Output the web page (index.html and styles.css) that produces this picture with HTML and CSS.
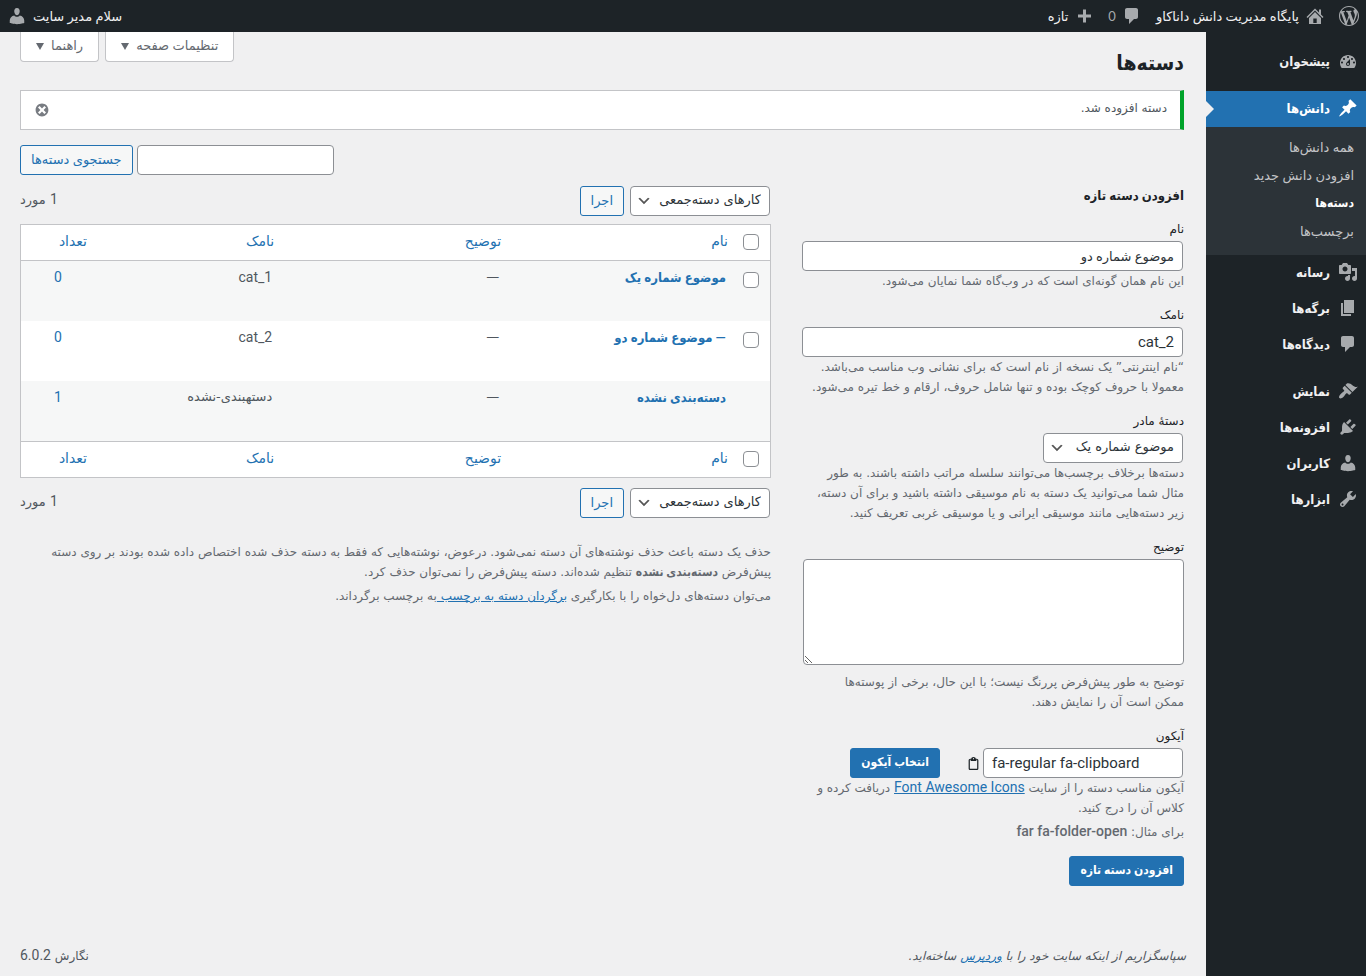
FILE: index.html
```html
<!DOCTYPE html>
<html lang="fa" dir="rtl">
<head>
<meta charset="utf-8">
<meta name="viewport" content="width=device-width, initial-scale=1">
<title>دسته‌ها</title>
<link rel="stylesheet" href="styles.css">
</head>
<body>
<header class="adminbar">
  <nav class="bar-group">
    <a class="bar-item" href="#" aria-label="وردپرس"><svg class="icon" viewBox="0 0 20 20"><path d="M20 10c0-5.51-4.49-10-10-10C4.48 0 0 4.49 0 10c0 5.52 4.48 10 10 10 5.51 0 10-4.48 10-10zM7.78 15.37L4.37 6.22c.55-.02 1.17-.08 1.17-.08.5-.06.44-1.13-.06-1.11 0 0-1.45.11-2.37.11-.18 0-.37 0-.58-.01C4.12 2.69 6.87 1.11 10 1.11c2.33 0 4.45.87 6.05 2.34-.68-.11-1.65.39-1.65 1.58 0 .74.45 1.36.9 2.1.35.61.55 1.36.55 2.46 0 1.49-1.4 5-1.4 5l-3.03-8.37c.54-.02.82-.17.82-.17.5-.05.44-1.25-.06-1.22 0 0-1.44.12-2.38.12-.87 0-2.33-.12-2.33-.12-.5-.03-.56 1.2-.06 1.22l.92.08 1.26 3.41zM17.41 10c.24-.64.74-1.87.43-4.25.7 1.29 1.05 2.71 1.05 4.25 0 3.29-1.73 6.24-4.4 7.78.97-2.59 1.94-5.2 2.92-7.78zM6.1 18.09C3.12 16.65 1.11 13.53 1.11 10c0-1.3.23-2.48.72-3.59C3.25 10.3 4.67 14.2 6.1 18.09zm4.03-6.63l2.58 6.98c-.86.29-1.76.45-2.71.45-.79 0-1.57-.11-2.29-.33.81-2.38 1.62-4.74 2.42-7.1z"/></svg></a>
    <a class="bar-item" href="#"><svg class="icon" viewBox="0 0 20 20"><path fill-rule="evenodd" d="M16 8.500l2.500 2.500-1.060 1.060L10 4.600l-7.440 7.460L1.500 11 10 2.500l4 4v-3h2v5zm-6-2.460l6 5.990V18H4v-5.970zM11.700 17v-4.500H8.300V17h3.400z"/></svg><span>پایگاه مدیریت دانش داناکاو</span></a>
    <a class="bar-item" href="#"><svg class="icon" viewBox="0 0 20 20"><path d="M5 2h9c1.100 0 2 .900 2 2v7c0 1.100-.900 2-2 2h-2l-5 5v-5H5c-1.100 0-2-.900-2-2V4c0-1.100.900-2 2-2z"/></svg><span class="bar-count">0</span></a>
    <a class="bar-item" href="#"><svg class="icon" viewBox="0 0 20 20"><path d="M17 8.500v3h-5v5H9v-5H4v-3h5v-5h3v5h5z"/></svg><span>تازه</span></a>
  </nav>
  <a class="bar-item" href="#"><span>سلام مدیر سایت</span><svg class="icon" viewBox="0 0 20 20"><path d="M10 9.250c-2.270 0-2.730-3.440-2.730-3.440C7 4.020 7.820 2 9.970 2c2.160 0 2.980 2.020 2.710 3.810 0 0-.410 3.440-2.680 3.440zM7.300 9.400c.700 1 1.600 1.300 2.700 1.300s2-.300 2.700-1.300c2.600.300 4.540 2.600 4.540 5.100v2.600s-3.650 1.130-7.240 1.130-7.240-1.130-7.240-1.130v-2.600c0-2.500 1.940-4.800 4.540-5.100z"/></svg></a>
</header>
<div class="shell">
  <nav class="sidebar">
    <ul class="menu">
      <li><a class="menu-link" href="#"><svg class="icon" viewBox="0 0 20 20"><path fill-rule="evenodd" d="M3.760 17h12.480c1.100-1.370 1.760-3.110 1.760-5 0-4.420-3.580-8-8-8s-8 3.580-8 8c0 1.890.660 3.630 1.760 5zM10 5c.550 0 1 .450 1 1s-.450 1-1 1-1-.450-1-1 .450-1 1-1zM6 7c.550 0 1 .450 1 1s-.450 1-1 1-1-.450-1-1 .450-1 1-1zm8 0c.550 0 1 .450 1 1s-.450 1-1 1-1-.450-1-1 .450-1 1-1zm-5.370 4.550L12 8v5c0 1.100-.900 2-2 2s-2-.900-2-2c0-.570.240-1.080.630-1.450zM4 10.500c.550 0 1 .450 1 1s-.450 1-1 1-1-.450-1-1 .450-1 1-1zm12 0c.550 0 1 .450 1 1s-.450 1-1 1-1-.450-1-1 .450-1 1-1z"/><circle cx="10" cy="13" r="1"/></svg><span>پیشخوان</span></a></li>
      <li class="menu-gap"><a class="menu-link current" href="#"><svg class="icon" viewBox="0 0 20 20"><path d="M10.440 3.020l1.820-1.820 6.360 6.350-1.830 1.820c-1.050-.680-2.480-.570-3.410.360l-.750.750c-.920.930-1.040 2.350-.350 3.410l-1.830 1.820-2.410-2.410-2.800 2.790c-.420.420-3.380 2.710-3.800 2.290s1.860-3.390 2.280-3.810l2.790-2.790L4.100 9.360l1.830-1.820c1.050.690 2.480.570 3.400-.360l.750-.750c.930-.920 1.050-2.350.360-3.410z"/></svg><span>دانش‌ها</span></a>
        <ul class="submenu">
          <li><a href="#">همه دانش‌ها</a></li>
          <li><a href="#">افزودن دانش جدید</a></li>
          <li><a class="selected" href="#">دسته‌ها</a></li>
          <li><a href="#">برچسب‌ها</a></li>
        </ul></li>
      <li><a class="menu-link" href="#"><svg class="icon" viewBox="0 0 20 20"><path fill-rule="evenodd" d="M13 11V4c0-.550-.450-1-1-1h-1.670L9 1H5L3.670 3H2c-.550 0-1 .450-1 1v7c0 .550.450 1 1 1h10c.550 0 1-.450 1-1zM7 4.500c1.380 0 2.500 1.120 2.500 2.500S8.380 9.500 7 9.500 4.500 8.380 4.500 7 5.620 4.500 7 4.500zM14 6h5v10.500c0 1.380-1.120 2.500-2.500 2.500S14 17.880 14 16.500s1.120-2.500 2.500-2.500c.170 0 .340.020.500.050V9h-3V6zm-4 8.050V13h2v3.500c0 1.380-1.120 2.500-2.500 2.500S7 17.880 7 16.500 8.120 14 9.500 14c.170 0 .340.020.500.050z"/></svg><span>رسانه</span></a></li>
      <li><a class="menu-link" href="#"><svg class="icon" viewBox="0 0 20 20"><path d="M6 15V2h10v13H6zm-1 1h8v2H3V5h2v11z"/></svg><span>برگه‌ها</span></a></li>
      <li><a class="menu-link" href="#"><svg class="icon" viewBox="0 0 20 20"><path d="M5 2h9c1.100 0 2 .900 2 2v7c0 1.100-.900 2-2 2h-2l-5 5v-5H5c-1.100 0-2-.900-2-2V4c0-1.100.900-2 2-2z"/></svg><span>دیدگاه‌ها</span></a></li>
      <li class="menu-gap"><a class="menu-link" href="#"><svg class="icon" viewBox="0 0 20 20"><path d="M14.480 11.060L7.410 3.990l1.500-1.500c.500-.560 2.300-.470 3.510.320 1.210.800 1.430 1.280 2.910 2.100 1.180.640 2.450 1.260 4.450.850zm-.710.710L6.700 4.700 4.930 6.470c-.390.390-.390 1.020 0 1.410l1.060 1.060c.390.390.390 1.030 0 1.420-.600.600-1.430 1.110-2.210 1.690-.350.260-.700.530-1.010.840C1.430 14.230.400 16.080 1.400 17.070c.990 1 2.840-.030 4.180-1.360.310-.310.580-.660.850-1.020.570-.780 1.080-1.610 1.690-2.210.390-.390 1.020-.390 1.410 0l1.060 1.060c.390.390 1.020.390 1.410 0z"/></svg><span>نمایش</span></a></li>
      <li><a class="menu-link" href="#"><svg class="icon" viewBox="0 0 20 20"><path d="M13.110 4.360L9.870 7.600 8 5.730l3.240-3.240c.350-.340 1.050-.200 1.560.320.520.510.660 1.210.310 1.550zm-8 1.770l.910-1.120 9.010 9.010-1.190.840c-.710.710-2.630 1.160-3.820 1.160H6.140L4.900 17.260c-.590.590-1.540.590-2.120 0-.590-.580-.590-1.530 0-2.120l1.240-1.240v-3.880c0-1.130.400-3.190 1.090-3.890zm7.260 3.970l3.240-3.240c.340-.350 1.040-.210 1.550.310.520.510.660 1.210.310 1.550l-3.240 3.250z"/></svg><span>افزونه‌ها</span></a></li>
      <li><a class="menu-link" href="#"><svg class="icon" viewBox="0 0 20 20"><path d="M10 9.250c-2.270 0-2.730-3.440-2.730-3.440C7 4.020 7.820 2 9.970 2c2.160 0 2.980 2.020 2.710 3.810 0 0-.410 3.440-2.680 3.440zM7.300 9.400c.700 1 1.600 1.300 2.700 1.300s2-.300 2.700-1.300c2.600.300 4.540 2.600 4.540 5.100v2.600s-3.650 1.130-7.240 1.130-7.240-1.130-7.240-1.130v-2.600c0-2.500 1.940-4.800 4.540-5.100z"/></svg><span>کاربران</span></a></li>
      <li><a class="menu-link" href="#"><svg class="icon" viewBox="0 0 20 20"><path fill-rule="evenodd" d="M16.680 9.770c-1.340 1.340-3.300 1.670-4.950.990l-5.410 6.520c-.990.990-2.590.990-3.580 0s-.990-2.590 0-3.570l6.520-5.420c-.680-1.650-.350-3.610.990-4.950 1.280-1.280 3.120-1.620 4.720-1.060l-2.890 2.890 2.820 2.820 2.860-2.870c.530 1.580.180 3.390-1.080 4.650zM3.810 16.210c.400.390 1.040.390 1.430 0 .400-.400.400-1.040 0-1.430-.390-.400-1.030-.400-1.430 0-.390.390-.390 1.030 0 1.430z"/></svg><span>ابزارها</span></a></li>
    </ul>
  </nav>
  <main class="content">
    <div class="wrap">
      <div class="head">
        <h1>دسته‌ها</h1>
        <div class="screen-tabs">
          <button type="button" class="tab-button">تنظیمات صفحه<span class="caret"></span></button>
          <button type="button" class="tab-button">راهنما<span class="caret"></span></button>
        </div>
      </div>
      <div class="notice">
        <p>دسته افزوده شد.</p>
        <button type="button" class="dismiss" aria-label="بستن"><svg viewBox="0 0 20 20"><path fill-rule="evenodd" d="M10 2c4.420 0 8 3.580 8 8s-3.580 8-8 8-8-3.580-8-8 3.580-8 8-8zm5 11l-3-3 3-3-2-2-3 3-3-3-2 2 3 3-3 3 2 2 3-3 3 3z"/></svg></button>
      </div>
      <form class="search">
        <input type="search" class="field search-field" aria-label="جستجوی دسته‌ها">
        <button type="button" class="button">جستجوی دسته‌ها</button>
      </form>
      <div class="columns">
        <form class="add-form">
          <h2>افزودن دسته تازه</h2>
          <div class="form-field">
            <label for="tag-name">نام</label>
            <input type="text" class="field" id="tag-name" value="موضوع شماره دو">
            <p>این نام همان گونه‌ای است که در وب‌گاه شما نمایان می‌شود.</p>
          </div>
          <div class="form-field">
            <label for="tag-slug">نامک</label>
            <input type="text" class="field field-latin" id="tag-slug" value="cat_2">
            <p>“نام اینترنتی” یک نسخه از نام است که برای نشانی وب مناسب می‌باشد. معمولا با حروف کوچک بوده و تنها شامل حروف، ارقام و خط تیره می‌شود.</p>
          </div>
          <div class="form-field">
            <label for="parent">دستهٔ مادر</label>
            <select class="select" id="parent"><option>موضوع شماره یک</option></select>
            <p>دسته‌ها برخلاف برچسب‌ها می‌توانند سلسله مراتب داشته باشند. به طور مثال شما می‌توانید یک دسته به نام موسیقی داشته باشید و برای آن دسته، زیر دسته‌هایی مانند موسیقی ایرانی و یا موسیقی غربی تعریف کنید.</p>
          </div>
          <div class="form-field">
            <label for="tag-description">توضیح</label>
            <textarea class="area" id="tag-description"></textarea>
            <p class="after-area">توضیح به طور پیش‌فرض پررنگ نیست؛ با این حال، برخی از پوسته‌ها ممکن است آن را نمایش دهند.</p>
          </div>
          <div class="form-field">
            <label for="tag-icon">آیکون</label>
            <div class="icon-row">
              <input type="text" class="field field-latin icon-field" id="tag-icon" dir="ltr" value="fa-regular fa-clipboard">
              <svg class="clip" viewBox="0 0 384 512"><path fill-rule="evenodd" d="M320 64h-40c0-35-35-64-88-64s-88 29-88 64H64C29 64 0 93 0 128v320c0 35 29 64 64 64h256c35 0 64-29 64-64V128c0-35-29-64-64-64zM192 40c13 0 24 11 24 24s-11 24-24 24-24-11-24-24 11-24 24-24zM336 448c0 9-7 16-16 16H64c-9 0-16-7-16-16V128c0-9 7-16 16-16h16v48h224v-48h16c9 0 16 7 16 16z"/></svg>
              <button type="button" class="button primary">انتخاب آیکون</button>
            </div>
            <p>آیکون مناسب دسته را از سایت <a class="latin" href="#">Font Awesome Icons</a> دریافت کرده و کلاس آن را درج کنید.</p>
            <p class="example">برای مثال: <b class="latin">far fa-folder-open</b></p>
          </div>
          <button type="button" class="button primary">افزودن دسته تازه</button>
        </form>
        <section class="list">
          <div class="bulk">
            <select class="select" aria-label="کارهای دسته‌جمعی"><option>کارهای دسته‌جمعی</option></select>
            <button type="button" class="button">اجرا</button>
            <span class="total"><span class="latin">1</span> مورد</span>
          </div>
          <table class="terms">
            <colgroup><col class="col-check"><col><col><col class="col-slug"><col class="col-count"></colgroup>
            <thead><tr><th class="check"><input type="checkbox" aria-label="انتخاب همه"></th><th><a href="#">نام</a></th><th><a href="#">توضیح</a></th><th><a href="#">نامک</a></th><th><a href="#">تعداد</a></th></tr></thead>
            <tbody>
              <tr><td class="check"><input type="checkbox" aria-label="موضوع شماره یک"></td><td><a class="term" href="#">موضوع شماره یک</a></td><td>—</td><td class="latin">cat_1</td><td class="count latin"><a href="#">0</a></td></tr>
              <tr><td class="check"><input type="checkbox" aria-label="موضوع شماره دو"></td><td><a class="term" href="#">— موضوع شماره دو</a></td><td>—</td><td class="latin">cat_2</td><td class="count latin"><a href="#">0</a></td></tr>
              <tr><td class="check"></td><td><a class="term" href="#">دسته‌بندی نشده</a></td><td>—</td><td>دستهبندی-نشده</td><td class="count latin"><a href="#">1</a></td></tr>
            </tbody>
            <tfoot><tr><th class="check"><input type="checkbox" aria-label="انتخاب همه"></th><th><a href="#">نام</a></th><th><a href="#">توضیح</a></th><th><a href="#">نامک</a></th><th><a href="#">تعداد</a></th></tr></tfoot>
          </table>
          <div class="bulk">
            <select class="select" aria-label="کارهای دسته‌جمعی"><option>کارهای دسته‌جمعی</option></select>
            <button type="button" class="button">اجرا</button>
            <span class="total"><span class="latin">1</span> مورد</span>
          </div>
          <div class="notes">
            <p>حذف یک دسته باعث حذف نوشته‌های آن دسته نمی‌شود. درعوض، نوشته‌هایی که فقط به دسته حذف شده اختصاص داده شده بودند بر روی دسته پیش‌فرض <b>دسته‌بندی نشده</b> تنظیم شده‌اند. دسته پیش‌فرض را نمی‌توان حذف کرد.</p>
            <p>می‌توان دسته‌های دل‌خواه را با بکارگیری <a href="#">برگردان دسته به برچسب </a>به برچسب برگرداند.</p>
          </div>
        </section>
      </div>
    </div>
    <footer class="footer">
      <p class="thanks">سپاسگزاریم از اینکه سایت خود را با <a href="#">وردپرس</a> ساخته‌اید.</p>
      <p>نگارش <span class="latin">6.0.2</span></p>
    </footer>
  </main>
</div>
</body>
</html>
```

FILE: styles.css
```css
* { box-sizing: border-box; }
html { height: 100%; }
body {
  margin: 0;
  min-height: 100%;
  display: flex;
  flex-direction: column;
  background: #f0f0f1;
  color: #50575e;
  font: 12px/20px "DejaVu Sans", sans-serif;
}
h1, h2, p, ul { margin: 0; padding: 0; }
ul { list-style: none; }
a { color: #2271b1; }
input, select, textarea, button { font: inherit; margin: 0; }
.adminbar, .submenu, .tab-button, .button, .field {
  font-family: Lato, "DejaVu Sans", sans-serif;
  font-size: 13px;
}
.latin { font-family: Roboto, sans-serif; font-size: 14px; }
p .latin, .total .latin { line-height: 1; }
b, h1, h2, .button.primary, .selected, .menu-link, .terms .term {
  font-family: Lato, "DejaVu Sans Condensed", "DejaVu Sans", sans-serif;
  font-weight: 700;
}
b.latin { font-family: Roboto, sans-serif; font-weight: 500; }

.adminbar {
  height: 32px;
  display: flex;
  justify-content: space-between;
  background: #1d2327;
  padding: 0 7px;
}
.bar-group { display: flex; gap: 14px; }
.bar-item {
  display: flex;
  align-items: center;
  gap: 6px;
  color: #f0f0f1;
  text-decoration: none;
}
.bar-count { color: #a7aaad; }
.icon { width: 20px; height: 20px; fill: #a7aaad; flex: none; }

.shell { flex: 1; display: flex; }
.sidebar { width: 160px; flex: none; background: #1d2327; }
.menu { padding-top: 12px; }
.menu-gap { margin-top: 11px; }
.menu-link {
  display: flex;
  align-items: center;
  gap: 8px;
  height: 36px;
  padding: 0 8px 2px;
  color: #f0f0f1;
  text-decoration: none;
  font-size: 13px;
}
.current { background: #2271b1; color: #fff; position: relative; }
.current .icon { fill: #fff; }
.current::after {
  content: "";
  position: absolute;
  left: 0;
  top: 10px;
  border: 8px solid transparent;
  border-left-color: #f0f0f1;
  border-right-width: 0;
}
.submenu { background: #2c3338; padding: 6px 0 10px; }
.submenu a {
  display: block;
  padding: 4px 12px;
  color: #c3c4c7;
  text-decoration: none;
}
.submenu .selected { color: #fff; font-size: 12px; }

.content {
  flex: 1;
  min-width: 0;
  display: flex;
  flex-direction: column;
  padding: 0 20px;
}
.wrap { flex: 1; padding-right: 2px; }
.head { display: flex; justify-content: space-between; align-items: flex-start; height: 58px; }
h1 { font-size: 21px; line-height: 30px; color: #1d2327; padding-top: 15px; }
.screen-tabs { display: flex; gap: 6px; }
.tab-button {
  display: flex;
  align-items: center;
  gap: 7px;
  height: 30px;
  padding: 0 15px 4px;
  background: #fff;
  border: 1px solid #c3c4c7;
  border-top: 0;
  border-radius: 0 0 4px 4px;
  color: #646970;
}
.caret { border: 4px solid transparent; border-top: 7px solid #646970; border-bottom: 0; margin-top: 4px; }

.notice {
  display: flex;
  align-items: center;
  justify-content: space-between;
  height: 40px;
  padding: 0 13px;
  background: #fff;
  border: 1px solid #c3c4c7;
  border-right: 4px solid #00a32a;
}
.notice p { padding-bottom: 4px; }
.dismiss { border: 0; background: none; padding: 0; width: 16px; height: 16px; }
.dismiss svg { display: block; width: 16px; height: 16px; fill: #787c82; }

.field, .select, .area {
  background: #fff;
  border: 1px solid #8c8f94;
  border-radius: 4px;
  color: #2c3338;
  outline: 0;
}
.field { display: block; height: 30px; padding: 0 8px; }
.field-latin { font-family: Roboto, sans-serif; font-size: 15px; }
.select {
  display: block;
  appearance: none;
  width: 140px;
  height: 30px;
  padding: 0 8px 2px 20px;
  font-size: 13px;
  background: #fff url("data:image/svg+xml,%3Csvg xmlns='http://www.w3.org/2000/svg' viewBox='0 0 20 20'%3E%3Cpath d='M5 6l5 5 5-5 2 1-7 7-7-7 2-1z' fill='%23555'/%3E%3C/svg%3E") no-repeat left 5px center / 16px;
}
.button {
  height: 30px;
  padding: 0 10px 2px;
  background: #f6f7f7;
  border: 1px solid #2271b1;
  border-radius: 3px;
  color: #2271b1;
}
.button.primary { background: #2271b1; color: #fff; font-size: 12px; }

.search { display: flex; justify-content: flex-end; gap: 4px; margin-top: 15px; }
.search-field { width: 197px; }

.columns { display: grid; grid-template-columns: minmax(0, 381fr) minmax(0, 751fr); gap: 32px; margin-top: 10px; }
h2 { font-size: 13px; line-height: 20px; color: #1d2327; margin-bottom: 14px; }
.form-field { margin-bottom: 14px; color: #646970; }
.form-field .field, .form-field .select { margin-right: 1px; }
.form-field > .field { width: 100%; }
.form-field label { display: block; color: #1d2327; margin-bottom: 2px; }
.area { display: block; width: 100%; height: 106px; resize: vertical; }
.after-area { margin-top: 7px; padding-left: 20px; }
.icon-row { display: flex; align-items: center; }
.icon-field { width: 200px; }
.clip { width: 11px; height: 13px; fill: #1d2327; margin: 0 4px 0 28px; }
.example { margin-top: 4px; }

.list { padding-top: 1px; }
.bulk { display: flex; align-items: center; gap: 6px; padding-right: 1px; }
.total { margin-right: auto; padding-bottom: 2px; font-size: 13px; }
.terms {
  width: 100%;
  margin: 8px 0 10px;
  table-layout: fixed;
  border-collapse: separate;
  border-spacing: 0;
  background: #fff;
  border: 1px solid #c3c4c7;
}
.col-check { width: 34px; }
.col-slug { width: 25%; }
.col-count { width: 74px; }
.terms th { height: 36px; padding: 0 8px 4px; text-align: right; font-size: 14px; font-weight: 400; border-bottom: 1px solid #c3c4c7; }
.terms tfoot th { border-bottom: 0; border-top: 1px solid #c3c4c7; }
.terms td { height: 60px; padding: 6px 10px; vertical-align: top; font-size: 13px; }
.terms td.latin { font-size: 14px; }
.terms tbody tr:nth-child(odd) { background: #f6f7f7; }
.terms a { text-decoration: none; }
.terms .check { padding: 0 11px 2px 0; }
.terms td.check { padding-top: 11px; }
.terms .count { text-align: center; }
.terms input {
  appearance: none;
  display: block;
  width: 16px;
  height: 16px;
  background: #fff;
  border: 1px solid #8c8f94;
  border-radius: 4px;
}
.notes { margin-top: 24px; color: #646970; }
.notes p + p { margin-top: 4px; }

.footer { display: flex; justify-content: space-between; padding: 10px 0; color: #50575e; }
.thanks { font-style: italic; }
```
